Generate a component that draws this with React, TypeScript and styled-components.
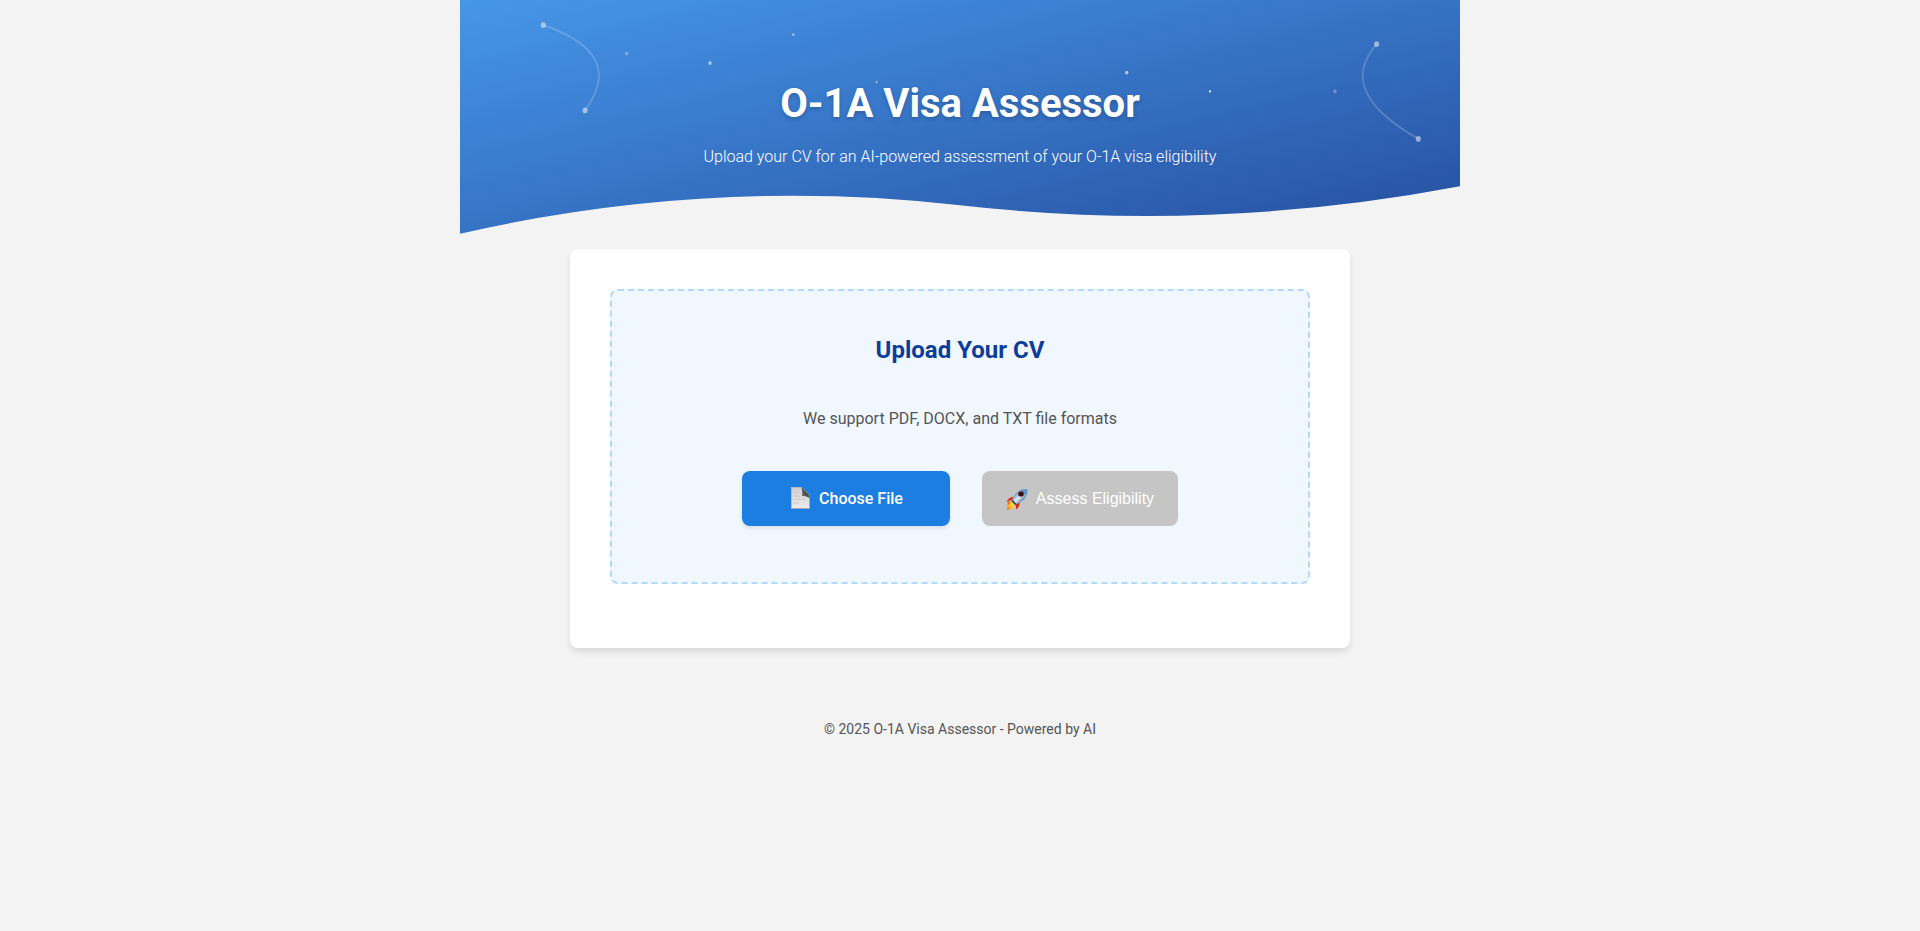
import React, { useRef } from 'react';
import styled, { createGlobalStyle } from 'styled-components';

const GlobalStyle = createGlobalStyle`
  *, *::before, *::after { box-sizing: border-box; }
  html { background: #f4f4f4; }
  body {
    margin: 0;
    background: #f3f3f3;
    color: #555555;
    font-family: Roboto, "Liberation Sans", sans-serif;
    font-size: 16px;
    line-height: 26px;
  }
`;

const Page = styled.div`
  width: 100%;
  max-width: 1000px;
  margin: 0 auto;
`;

const Hero = styled.header`
  position: relative;
  display: flex;
  flex-direction: column;
  align-items: center;
  gap: 14px;
  padding: 78px 20px 67px;
  color: #ffffff;
  text-align: center;
`;

const HeroArt = styled.svg`
  position: absolute;
  inset: 0;
  width: 100%;
  height: 100%;
`;

const Title = styled.h1`
  position: relative;
  margin: 0;
  font-size: 40px;
  line-height: 52px;
  font-weight: 700;
  text-shadow: 0 2px 4px rgba(0, 0, 0, 0.2);
`;

const Subtitle = styled.p`
  position: relative;
  margin: 0;
  font-weight: 300;
`;

const Main = styled.main`
  width: 100%;
  max-width: 820px;
  margin: 0 auto;
  padding: 12px 20px 0;
`;

const Card = styled.section`
  padding: 40px 40px 64px;
  border-radius: 8px;
  background: #ffffff;
  box-shadow: 0 4px 6px rgba(0, 0, 0, 0.1);
`;

const UploadArea = styled.form`
  display: flex;
  flex-direction: column;
  align-items: center;
  padding: 38px;
  border: 2px dashed #b3d9fa;
  border-radius: 8px;
  background: #f0f7ff;
  text-align: center;
`;

const Heading = styled.h2`
  margin: 0 0 35px;
  color: #0d3c99;
  font-size: 24px;
  line-height: 42px;
  font-weight: 700;
`;

const Formats = styled.p`
  margin: 0;
`;

const Actions = styled.div`
  display: flex;
  flex-wrap: wrap;
  justify-content: center;
  gap: 32px;
  margin: 39px 0 18px;
`;

const ActionButton = styled.button<{ $width: number; $face: string }>`
  display: flex;
  align-items: center;
  justify-content: center;
  gap: 8px;
  width: ${(p) => p.$width}px;
  height: 55px;
  padding: 0;
  border: 0;
  border-radius: 8px;
  background: #1c7ee1;
  box-shadow: 0 2px 4px rgba(0, 0, 0, 0.1);
  color: #ffffff;
  font-family: ${(p) => p.$face}, sans-serif;
  font-size: 16px;
  font-weight: 500;
  cursor: pointer;

  &:disabled {
    background: #c5c5c5;
    box-shadow: none;
    cursor: not-allowed;
  }
`;

const Footer = styled.footer`
  padding: 68px 20px 17px;
  font-size: 14px;
  line-height: 26px;
  text-align: center;
`;

const stars = [
  { x: 200, y: 60, r: 2, opacity: 0.3 },
  { x: 300, y: 70, r: 2, opacity: 0.6 },
  { x: 400, y: 40, r: 1.5, opacity: 0.5 },
  { x: 500, y: 90, r: 1.2, opacity: 0.5 },
  { x: 800, y: 80, r: 2, opacity: 0.6 },
  { x: 900, y: 100, r: 1.2, opacity: 1 },
  { x: 1050, y: 100, r: 2, opacity: 0.3 },
  { x: 100, y: 30, r: 3, opacity: 0.5 },
  { x: 150, y: 120, r: 3, opacity: 0.5 },
  { x: 1100, y: 50, r: 3, opacity: 0.5 },
  { x: 1150, y: 150, r: 3, opacity: 0.5 },
];

function HeroBackground() {
  return (
    <HeroArt viewBox="0 3.5 1200 250" preserveAspectRatio="none" aria-hidden="true">
      <defs>
        <linearGradient id="sky" x1="0" y1="0" x2="1" y2="1">
          <stop offset="0" stopColor="#4697e8" />
          <stop offset="0.5" stopColor="#3673c5" />
          <stop offset="1" stopColor="#264f9f" />
        </linearGradient>
      </defs>
      <path d="M0 0H1200V200Q900 250 600 220T0 250Z" fill="url(#sky)" />
      <g fill="none" stroke="#ffffff" strokeOpacity="0.2" strokeWidth="2">
        <path d="M100 30Q200 60 150 120" />
        <path d="M1100 50Q1050 100 1150 150" />
      </g>
      {stars.map((s) => (
        <circle key={`${s.x}-${s.y}`} cx={s.x} cy={s.y} r={s.r} fill="#ffffff" opacity={s.opacity} />
      ))}
    </HeroArt>
  );
}

function FileIcon() {
  return (
    <svg width="22" height="24" viewBox="0 0 22 24" aria-hidden="true">
      <defs>
        <linearGradient id="paper" x1="0" y1="0" x2="0" y2="1">
          <stop offset="0" stopColor="#cfcfcf" />
          <stop offset="1" stopColor="#ececec" />
        </linearGradient>
        <linearGradient id="fold" x1="1" y1="0" x2="0" y2="1">
          <stop offset="0" stopColor="#c9c9c9" />
          <stop offset="0.5" stopColor="#4a4a4a" />
          <stop offset="1" stopColor="#858585" />
        </linearGradient>
      </defs>
      <path d="M2 0H12.5L20.5 7.5V21.5H2Z" fill="url(#paper)" />
      <path d="M2.5 21V.5H12" fill="none" stroke="#b5b5b5" strokeWidth="0.8" />
      <path d="M4 5.5H10M4 9H11M4 12.5H17M4 16H10" stroke="#c8c8c8" strokeWidth="0.8" />
      <path d="M12 0Q14 3 13 9Q17 8.500 20.500 11V7.500Z" fill="url(#fold)" />
      <path d="M2 21.5H20.500" stroke="#a5a5a5" strokeWidth="0.8" />
    </svg>
  );
}

function RocketIcon() {
  return (
    <svg width="22" height="24" viewBox="0 0 22 24" aria-hidden="true">
      <defs>
        <linearGradient id="hull" x1="0.2" y1="0.2" x2="0.8" y2="0.8">
          <stop offset="0" stopColor="#3f86c4" />
          <stop offset="0.5" stopColor="#e6edf3" />
          <stop offset="1" stopColor="#2c5c92" />
        </linearGradient>
        <linearGradient id="flame" x1="1" y1="0" x2="0" y2="1">
          <stop offset="0" stopColor="#fff27a" />
          <stop offset="0.6" stopColor="#f9c022" />
          <stop offset="1" stopColor="#e8621a" />
        </linearGradient>
      </defs>
      <path d="M8.500 9.500Q3 10 .5 14.500Q3.500 13 6.500 13.500Z" fill="#dd2f1c" />
      <path d="M13.500 15.500Q14.500 19 10 22.500Q10.500 19.500 9 17.500Z" fill="#d62718" />
      <path d="M6 14Q1.500 15.500 1 23Q7.500 22.500 9 18Z" fill="url(#flame)" />
      <path d="M.8 14Q2.500 16 1.500 18.500L5 15Z" fill="#ef6a1d" />
      <path d="M21.500 2Q13 1.500 8.500 8Q6.500 11 6 13.500L9.500 17.500Q13 16.500 16 14Q22 9.500 21.500 2Z" fill="url(#hull)" />
      <path d="M21.500 2Q17 1.500 14 3.500L20 9Q21.700 5.500 21.500 2Z" fill="#5f94c6" />
      <path d="M6.500 12.500L10.500 17L9 18L5.500 14.500Z" fill="#4b4b50" />
      <ellipse cx="15" cy="7" rx="3" ry="2.700" fill="#8d1f22" />
      <circle cx="15" cy="7" r="2" fill="#14141c" />
    </svg>
  );
}

export default function App() {
  const picker = useRef<HTMLInputElement>(null);
  return (
    <>
      <GlobalStyle />
      <Page>
        <Hero>
          <HeroBackground />
          <Title>O-1A Visa Assessor</Title>
          <Subtitle>Upload your CV for an AI-powered assessment of your O-1A visa eligibility</Subtitle>
        </Hero>
        <Main>
          <Card>
            <UploadArea>
              <Heading>Upload Your CV</Heading>
              <Formats>We support PDF, DOCX, and TXT file formats</Formats>
              <Actions>
                <input ref={picker} type="file" accept=".pdf,.docx,.txt" aria-label="CV file" hidden />
                <ActionButton type="button" $width={208} $face="Roboto" onClick={() => picker.current?.click()}>
                  <FileIcon />
                  Choose File
                </ActionButton>
                <ActionButton type="submit" $width={196} $face='"Liberation Sans"' disabled>
                  <RocketIcon />
                  Assess Eligibility
                </ActionButton>
              </Actions>
            </UploadArea>
          </Card>
        </Main>
        <Footer>© 2025 O-1A Visa Assessor - Powered by AI</Footer>
      </Page>
    </>
  );
}
